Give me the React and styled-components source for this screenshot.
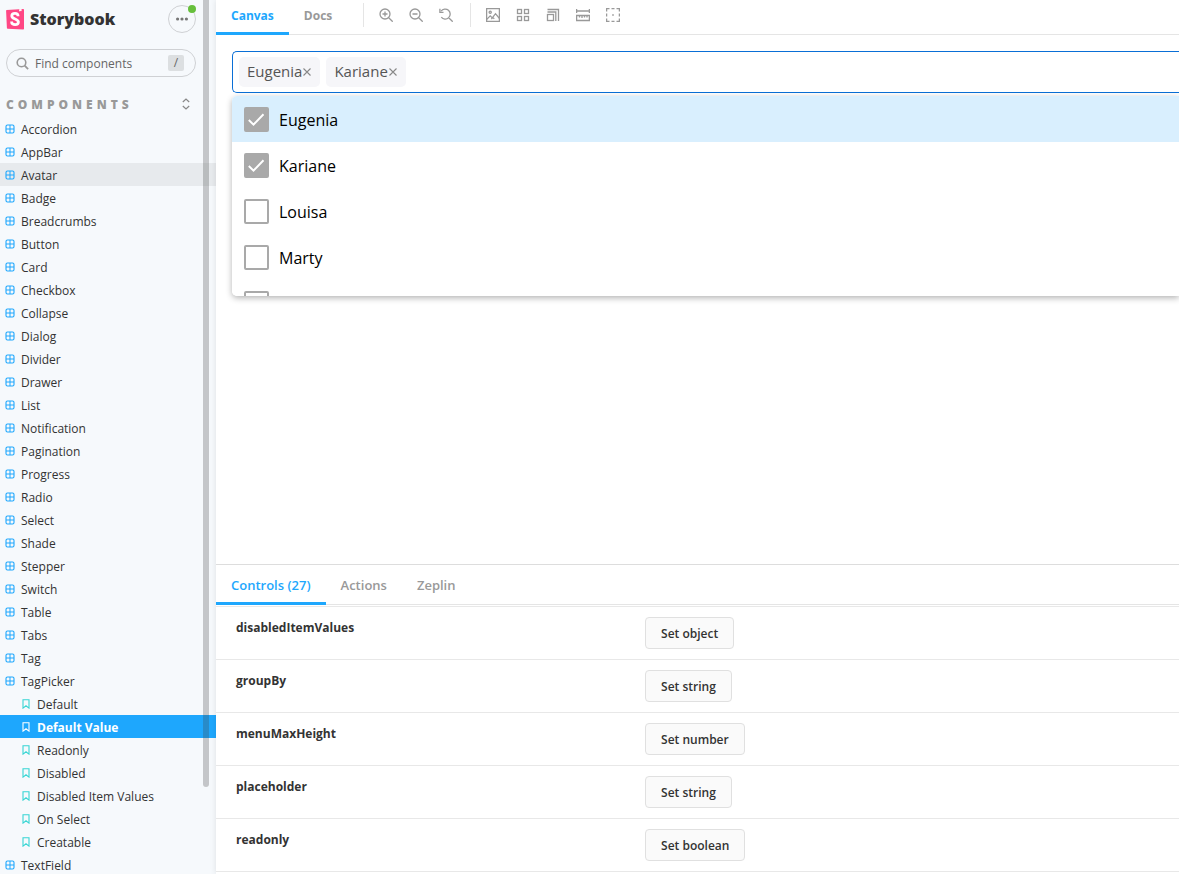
import React, { useState } from "react";
import styled, { createGlobalStyle, css } from "styled-components";

const GlobalStyle = createGlobalStyle`
  * {
    box-sizing: border-box;
  }
  body {
    margin: 0;
    overflow: hidden;
    background: #ffffff;
    color: #333333;
    font-family: "Open Sans", "Noto Sans", sans-serif;
    font-size: 12px;
  }
  button,
  input {
    font-family: inherit;
  }
`;

const components = [
  "Accordion",
  "AppBar",
  "Avatar",
  "Badge",
  "Breadcrumbs",
  "Button",
  "Card",
  "Checkbox",
  "Collapse",
  "Dialog",
  "Divider",
  "Drawer",
  "List",
  "Notification",
  "Pagination",
  "Progress",
  "Radio",
  "Select",
  "Shade",
  "Stepper",
  "Switch",
  "Table",
  "Tabs",
  "Tag",
  "TagPicker",
  "TextField",
];

const stories = [
  "Default",
  "Default Value",
  "Readonly",
  "Disabled",
  "Disabled Item Values",
  "On Select",
  "Creatable",
];

const people = ["Eugenia", "Kariane", "Louisa", "Marty", ""];

const controls = [
  { name: "disabledItemValues", type: "object" },
  { name: "groupBy", type: "string" },
  { name: "menuMaxHeight", type: "number" },
  { name: "placeholder", type: "string" },
  { name: "readonly", type: "boolean" },
];

const Layout = styled.div`
  display: grid;
  grid-template-columns: 216px minmax(0, 1fr);
  height: 100vh;
`;

/* sidebar */

const Sidebar = styled.aside`
  position: relative;
  overflow: hidden;
  background: #f6f9fc;
`;

const ScrollThumb = styled.div`
  position: absolute;
  top: 0;
  right: 7px;
  width: 6px;
  height: 90%;
  border-radius: 0 0 3px 3px;
  background: rgba(68, 68, 68, 0.28);
`;

const Brand = styled.header`
  display: flex;
  align-items: center;
  justify-content: space-between;
  padding: 5px 20px 0 6px;
`;

const BrandLink = styled.a`
  display: flex;
  align-items: center;
  gap: 6px;
  color: #333333;
  font-size: 16px;
  font-weight: 800;
  line-height: 28px;
  text-decoration: none;
`;

const MenuButton = styled.button`
  position: relative;
  display: flex;
  align-items: center;
  justify-content: center;
  width: 28px;
  height: 28px;
  padding: 0;
  border: 1px solid #cfd1d4;
  border-radius: 50%;
  background: transparent;
  color: #777777;
`;

const UpdateDot = styled.span`
  position: absolute;
  top: -1px;
  right: -1px;
  width: 8px;
  height: 8px;
  border-radius: 50%;
  background: #66bf3c;
`;

const Search = styled.label`
  display: flex;
  align-items: center;
  gap: 6px;
  height: 28px;
  margin: 16px 20px 0 6px;
  padding: 0 11px 0 9px;
  border: 1px solid #cfd1d4;
  border-radius: 28px;
  color: #999999;
`;

const SearchInput = styled.input`
  flex: 1;
  min-width: 0;
  padding: 0;
  border: 0;
  outline: 0;
  background: transparent;
  color: #333333;
  font-size: 12px;
  &::placeholder {
    color: #666666;
    opacity: 1;
  }
`;

const Shortcut = styled.kbd`
  width: 16px;
  height: 16px;
  border-radius: 2px;
  background: #dcdfe1;
  color: #666666;
  font-family: inherit;
  font-size: 12px;
  line-height: 16px;
  text-align: center;
`;

const GroupHead = styled.div`
  display: flex;
  align-items: center;
  justify-content: space-between;
  height: 27px;
  margin-top: 13px;
  padding: 0 25px 0 6px;
`;

const GroupTitle = styled.h2`
  margin: 0;
  padding-top: 2px;
  color: #999999;
  font-size: 12px;
  font-weight: 800;
  letter-spacing: 4px;
  text-transform: uppercase;
`;

const PlainButton = styled.button`
  display: flex;
  padding: 0;
  border: 0;
  background: transparent;
  color: #888888;
`;

const Tree = styled.ul`
  margin: 0;
  padding: 0;
  list-style: none;
`;

const TreeLink = styled.a`
  display: flex;
  align-items: center;
  gap: 6px;
  height: 23px;
  padding: 2px 0 0 ${(props) => (props.$story ? 21 : 5)}px;
  color: #333333;
  line-height: 21px;
  text-decoration: none;
  white-space: nowrap;
  svg {
    flex: none;
    margin-bottom: 2px;
    color: ${(props) => (props.$story ? "#37d5d3" : "#1ea7fd")};
  }
  ${(props) =>
    props.$hovered &&
    css`
      background: #e7eaed;
    `}
  ${(props) =>
    props.$selected &&
    css`
      background: #1ea7fd;
      color: #ffffff;
      font-weight: 700;
      svg {
        color: #ffffff;
      }
    `}
`;

/* main */

const Main = styled.main`
  display: grid;
  grid-template-rows: minmax(0, 20fr) minmax(0, 11fr);
  box-shadow: 0 0 6px rgba(0, 0, 0, 0.1);
  z-index: 1;
  background: #ffffff;
`;

const Preview = styled.section`
  overflow: hidden;
`;

const Bar = styled.div`
  display: flex;
  height: ${(props) => (props.$tall ? 40 : 35)}px;
  border-bottom: 1px solid #e5e5e5;
`;

const Tab = styled.button`
  height: ${(props) => (props.$tall ? 40 : 35)}px;
  padding: ${(props) => (props.$tall ? "3px 15px 0" : "0 15px 2px")};
  border: 0;
  border-bottom: 3px solid
    ${(props) => (props.$active ? "#1ea7fd" : "transparent")};
  background: transparent;
  color: ${(props) => (props.$active ? "#1ea7fd" : "#999999")};
  font-size: ${(props) => (props.$tall ? 13 : 12)}px;
  font-weight: ${(props) => (props.$tall ? 600 : 700)};
  white-space: nowrap;
`;

const Tools = styled.div`
  display: flex;
  align-items: center;
  gap: 14px;
  height: 24px;
  margin: 3px 0 0 16px;
  padding-left: 14px;
  border-left: 1px solid #e5e5e5;
`;

const ToolButton = styled(PlainButton)`
  color: #999999;
  padding: 1px;
`;

const Story = styled.div`
  padding: 16px 0 16px 16px;
`;

const Picker = styled.div`
  display: flex;
  align-items: center;
  gap: 6px;
  height: 42px;
  padding: 0 6px;
  border: 1px solid #0a6fd6;
  border-right: 0;
  border-radius: 5px 0 0 5px;
`;

const Chip = styled.span`
  display: flex;
  align-items: center;
  height: 30px;
  padding: 0 8px 2px;
  border-radius: 5px;
  background: #f6f6f9;
  color: #555555;
  font-size: 15px;
  ${PlainButton} {
    padding-top: 2px;
  }
`;

const Menu = styled.ul`
  height: 200px;
  margin: 3px 0 0;
  padding: 0;
  overflow: hidden;
  border-radius: 5px 0 0 5px;
  box-shadow: 0 2px 6px rgba(0, 0, 0, 0.3);
  list-style: none;
`;

const Option = styled.label`
  display: flex;
  align-items: center;
  gap: 10px;
  height: 46px;
  padding-left: 12px;
  background: ${(props) => (props.$focused ? "#d9effe" : "#ffffff")};
  color: #000000;
  font-size: 16px;
`;

const OptionName = styled.span`
  padding-top: 2px;
`;

const CheckWrap = styled.span`
  display: grid;
  input,
  svg {
    grid-area: 1 / 1;
  }
  svg {
    color: #ffffff;
    pointer-events: none;
  }
`;

const Check = styled.input`
  appearance: none;
  width: 25px;
  height: 25px;
  margin: 0;
  border: 2px solid #a9a9a9;
  border-radius: 2px;
  background: #ffffff;
  &:checked {
    background: #a9a9a9;
  }
`;

const Panel = styled.section`
  overflow: hidden;
  border-top: 1px solid #dddddd;
`;

const ControlsTable = styled.table`
  width: 100%;
  margin-top: 1px;
  border-collapse: collapse;
  border-top: 1px solid #e8e8e8;
  tr {
    height: 53px;
    border-bottom: 1px solid #e8e8e8;
  }
`;

const NameCell = styled.th`
  width: 43%;
  padding: 11px 15px 0 20px;
  color: #333333;
  font-size: 12px;
  font-weight: 700;
  line-height: 20px;
  text-align: left;
  vertical-align: top;
`;

const ControlCell = styled.td`
  padding: 10px 15px;
`;

const SetButton = styled.button`
  display: block;
  height: 32px;
  padding: 2px 15px 0;
  border: 1px solid #e0e0e0;
  border-radius: 4px;
  background: #fafafa;
  color: #333333;
  font-size: 12px;
  font-weight: 600;
`;

const LogoIcon = () => (
  <svg width="18" height="22" viewBox="0 0 18 22" aria-hidden="true">
    <path
      fill="#ff4785"
      d="M0.7 2.1 17.2 0.9a0.8 0.8 0 0 1 0.8 0.8v19a0.8 0.8 0 0 1-0.9 0.8L1.7 20.8A0.8 0.8 0 0 1 0.9 20L0.1 2.9a0.8 0.8 0 0 1 0.6-0.8z"
    />
    <path fill="#ffffff" d="M13.2 1.2 15.5 1l0.1 2.3-0.8-0.6-0.9 0.7-0.8-0.3z" />
    <path
      fill="none"
      stroke="#ffffff"
      strokeWidth="2.8"
      d="M12.1 8.2C12 6.2 10.8 5.4 9 5.4c-1.9 0-3.2 0.9-3.2 2.5 0 3.5 6.6 2.7 6.6 6.1 0 1.7-1.4 2.6-3.3 2.6-2 0-3.6-0.8-3.5-3.1"
    />
  </svg>
);

const SearchIcon = () => (
  <svg width="13" height="13" viewBox="0 0 13 13" fill="none" stroke="currentColor" aria-hidden="true">
    <circle cx="5.5" cy="5.5" r="4.3" strokeWidth="1.6" />
    <path d="m8.7 8.7 3.4 3.4" strokeWidth="1.8" />
  </svg>
);

const DotsIcon = () => (
  <svg width="14" height="14" viewBox="0 0 14 14" fill="currentColor" aria-hidden="true">
    <circle cx="2.6" cy="7" r="1.6" />
    <circle cx="7" cy="7" r="1.6" />
    <circle cx="11.4" cy="7" r="1.6" />
  </svg>
);

const ExpandIcon = () => (
  <svg width="10" height="12" viewBox="0 0 10 12" fill="none" stroke="currentColor" strokeWidth="1.2" aria-hidden="true">
    <path d="M1.8 4 5 1l3.2 3M1.8 8 5 11l3.2-3" />
  </svg>
);

const ComponentIcon = () => (
  <svg width="10" height="10" viewBox="0 0 10 10" fill="none" stroke="currentColor" aria-hidden="true">
    <rect x="1" y="1" width="8" height="8" rx="1.5" strokeWidth="1.1" />
    <path d="M5 1v8M1 5h8" strokeWidth="1" />
  </svg>
);

const BookmarkIcon = () => (
  <svg width="10" height="10" viewBox="0 0 10 10" fill="none" stroke="currentColor" strokeWidth="1.1" aria-hidden="true">
    <path d="M2 0.7h6v8.4L5 6.7 2 9.1z" />
  </svg>
);

const CheckIcon = () => (
  <svg width="25" height="25" viewBox="0 0 25 25" fill="none" stroke="currentColor" strokeWidth="2" aria-hidden="true">
    <path d="m4.8 13 4.7 4.6L19.5 7.2" />
  </svg>
);

const toolPaths = {
  "Zoom in": (
    <>
      <circle cx="6" cy="6" r="5" />
      <path d="m9.7 9.7 4 4M3.5 6h5M6 3.5v5" />
    </>
  ),
  "Zoom out": (
    <>
      <circle cx="6" cy="6" r="5" />
      <path d="m9.7 9.7 4 4M3.5 6h5" />
    </>
  ),
  "Reset zoom": (
    <>
      <path d="M2.1 3.2A5 5 0 1 1 2.3 9.2M9.7 9.7l4 4" />
      <path d="M0.9 0.8v3.6h3.6" />
    </>
  ),
  Background: (
    <>
      <rect x="0.6" y="0.6" width="12.8" height="12.8" />
      <circle cx="4.2" cy="4.3" r="1.1" />
      <path d="m0.8 11.4 3.4-3.5 2.1 2 3.2-4.2 4 4.8M5.3 11l1.5-1.5 1.5 1.2" />
    </>
  ),
  Grid: (
    <>
      <rect x="1.5" y="1.5" width="4" height="4" />
      <rect x="8.5" y="1.5" width="4" height="4" />
      <rect x="1.5" y="8.5" width="4" height="4" />
      <rect x="8.5" y="8.5" width="4" height="4" />
    </>
  ),
  Viewport: (
    <>
      <rect x="1.5" y="6.5" width="6" height="6" />
      <path d="M1.5 4h8.3V13M1.5 1.5h11V13" />
    </>
  ),
  Measure: (
    <>
      <path d="M0.6 1v4M13.4 1v4M0.5 3h13" />
      <path d="M0.6 7.5h12.8v5H0.6zM3.5 7.5v2M6 7.5v2.5M8.5 7.5v2M11 7.5v2" />
    </>
  ),
  Outline: (
    <>
      <path d="M0.6 3.5V0.6h2.9M5.5 0.6h3M10.5 0.6h2.9v2.9M13.4 5.5v3M13.4 10.5v2.9h-2.9M8.5 13.4h-3M3.5 13.4H0.6v-2.9M0.6 8.5v-3" />
      <path d="M6.2 7h1.6" strokeWidth="1.6" />
    </>
  ),
};

const Tool = ({ name }) => (
  <ToolButton type="button" aria-label={name}>
    <svg width="14" height="14" viewBox="0 0 14 14" fill="none" stroke="currentColor" strokeWidth="1.3">
      {toolPaths[name]}
    </svg>
  </ToolButton>
);

const App = () => {
  const [picked, setPicked] = useState(["Eugenia", "Kariane"]);

  const toggle = (name) => {
    setPicked(
      picked.includes(name)
        ? picked.filter((item) => item !== name)
        : [...picked, name]
    );
  };

  return (
    <Layout>
      <GlobalStyle />
      <Sidebar>
        <Brand>
          <BrandLink href="#">
            <LogoIcon />
            Storybook
          </BrandLink>
          <MenuButton type="button" aria-label="Shortcuts">
            <DotsIcon />
            <UpdateDot />
          </MenuButton>
        </Brand>
        <Search>
          <SearchIcon />
          <SearchInput placeholder="Find components" aria-label="Find components" />
          <Shortcut>/</Shortcut>
        </Search>
        <GroupHead>
          <GroupTitle>Components</GroupTitle>
          <PlainButton type="button" aria-label="Expand all">
            <ExpandIcon />
          </PlainButton>
        </GroupHead>
        <Tree>
          {components.map((name) => (
            <li key={name}>
              <TreeLink href="#" $hovered={name === "Avatar"}>
                <ComponentIcon />
                {name}
              </TreeLink>
              {name === "TagPicker" && (
                <Tree>
                  {stories.map((story) => (
                    <li key={story}>
                      <TreeLink href="#" $story $selected={story === "Default Value"}>
                        <BookmarkIcon />
                        {story}
                      </TreeLink>
                    </li>
                  ))}
                </Tree>
              )}
            </li>
          ))}
        </Tree>
        <ScrollThumb />
      </Sidebar>
      <Main>
        <Preview>
          <Bar>
            <Tab type="button" $active>
              Canvas
            </Tab>
            <Tab type="button">Docs</Tab>
            <Tools>
              <Tool name="Zoom in" />
              <Tool name="Zoom out" />
              <Tool name="Reset zoom" />
            </Tools>
            <Tools>
              <Tool name="Background" />
              <Tool name="Grid" />
              <Tool name="Viewport" />
              <Tool name="Measure" />
              <Tool name="Outline" />
            </Tools>
          </Bar>
          <Story>
            <Picker>
              {picked.map((name) => (
                <Chip key={name}>
                  {name}
                  <PlainButton
                    type="button"
                    aria-label={`Remove ${name}`}
                    onClick={() => toggle(name)}
                  >
                    <svg width="10" height="10" viewBox="0 0 10 10" fill="none" stroke="currentColor" strokeWidth="1.1">
                      <path d="m1.5 1.5 7 7M8.5 1.5l-7 7" />
                    </svg>
                  </PlainButton>
                </Chip>
              ))}
            </Picker>
            <Menu>
              {people.map((name, index) => (
                <li key={name}>
                  <Option $focused={index === 0}>
                    <CheckWrap>
                      <Check
                        type="checkbox"
                        aria-label={name || "Unnamed"}
                        checked={picked.includes(name)}
                        onChange={() => toggle(name)}
                      />
                      {picked.includes(name) && <CheckIcon />}
                    </CheckWrap>
                    <OptionName>{name}</OptionName>
                  </Option>
                </li>
              ))}
            </Menu>
          </Story>
        </Preview>
        <Panel>
          <Bar $tall>
            <Tab type="button" $tall $active>
              Controls (27)
            </Tab>
            <Tab type="button" $tall>
              Actions
            </Tab>
            <Tab type="button" $tall>
              Zeplin
            </Tab>
          </Bar>
          <ControlsTable>
            <tbody>
              {controls.map((control) => (
                <tr key={control.name}>
                  <NameCell scope="row">{control.name}</NameCell>
                  <ControlCell>
                    <SetButton type="button">Set {control.type}</SetButton>
                  </ControlCell>
                </tr>
              ))}
            </tbody>
          </ControlsTable>
        </Panel>
      </Main>
    </Layout>
  );
};

export default App;
